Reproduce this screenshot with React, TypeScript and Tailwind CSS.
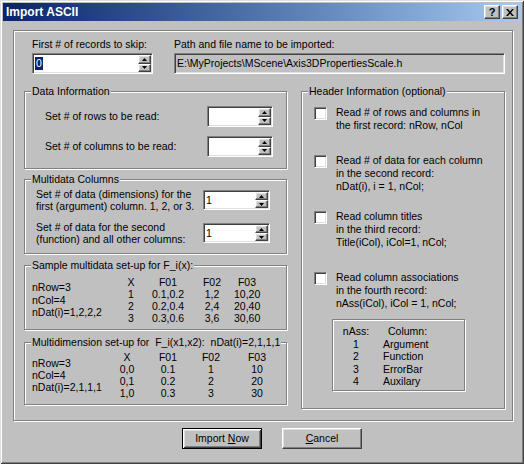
import type { ReactNode } from "react";

const sunken =
  "border border-t-[#808080] border-l-[#808080] border-r-white border-b-white shadow-[inset_1px_1px_0_#404040,inset_-1px_-1px_0_#dfdfdf]";
const raised =
  "border border-t-white border-l-white border-r-[#404040] border-b-[#404040] shadow-[inset_-1px_-1px_0_#808080,inset_1px_1px_0_#dfdfdf]";

function Group({ title, className, children }: { title: string; className?: string; children?: ReactNode }) {
  return (
    <div className={`relative border border-[#808080] shadow-[inset_1px_1px_0_#fff,1px_1px_0_#fff] ${className ?? ""}`}>
      <span className="absolute -top-[7px] left-[6px] bg-[#c0c0c0] px-[1px] leading-[13px] whitespace-pre">{title}</span>
      {children}
    </div>
  );
}

function SpinArrow({ up }: { up?: boolean }) {
  return (
    <div className={`flex flex-1 items-center justify-center bg-[#c0c0c0] ${raised}`}>
      <svg width="5" height="3" viewBox="0 0 5 3">
        {up ? <polygon points="2.5,0 5,3 0,3" fill="#000" /> : <polygon points="0,0 5,0 2.5,3" fill="#000" />}
      </svg>
    </div>
  );
}

function SpinBox({ value, selected, className }: { value?: string; selected?: boolean; className?: string }) {
  return (
    <div className={`flex bg-white p-[1px] ${sunken} ${className ?? ""}`}>
      <div className="flex flex-1 items-center pl-[1px] leading-[13px]">
        {value && (selected ? <span className="bg-[#0a246a] px-[1px] text-white">{value}</span> : <span>{value}</span>)}
      </div>
      <div className="flex w-[13px] flex-col">
        <SpinArrow up />
        <SpinArrow />
      </div>
    </div>
  );
}

function CheckRow({ lines, className }: { lines: string[]; className?: string }) {
  return (
    <div className={`flex items-start ${className ?? ""}`}>
      <div className={`mt-[1px] h-[13px] w-[13px] shrink-0 bg-white ${sunken}`} />
      <div className="ml-[9px] leading-[13px]">
        {lines.map((l) => (
          <div key={l}>{l}</div>
        ))}
      </div>
    </div>
  );
}

const SAMPLE = [
  ["X", "F01", "F02", "F03"],
  ["1", "0.1,0.2", "1,2", "10,20"],
  ["2", "0.2,0.4", "2,4", "20,40"],
  ["3", "0.3,0.6", "3,6", "30,60"],
];

const MULTI = [
  ["X", "F01", "F02", "F03"],
  ["0,0", "0.1", "1", "10"],
  ["0,1", "0.2", "2", "20"],
  ["1,0", "0.3", "3", "30"],
];

const ASSOC = [
  ["1", "Argument"],
  ["2", "Function"],
  ["3", "ErrorBar"],
  ["4", "Auxilary"],
];

export default function App() {
  return (
    <div className="h-[464px] w-[524px] overflow-hidden bg-[#c0c0c0] p-[3px] font-['Liberation_Sans',Arial,sans-serif] text-[10.5px] text-black shadow-[inset_1px_1px_0_#dfdfdf,inset_-1px_-1px_0_#404040,inset_2px_2px_0_#fff,inset_-2px_-2px_0_#808080]">
      {/* title bar */}
      <div className="flex h-[18px] items-center bg-gradient-to-r from-[#0a246a] to-[#a6caf0] pl-[3px] pr-[3px]">
        <span className="flex-1 text-[12px] font-bold text-white">Import ASCII</span>
        <div className={`flex h-[14px] w-[16px] items-center justify-center bg-[#c0c0c0] text-[11px] leading-none font-bold ${raised}`}>?</div>
        <div className={`ml-[2px] flex h-[14px] w-[16px] items-center justify-center bg-[#c0c0c0] ${raised}`}>
          <svg width="8" height="7" viewBox="0 0 8 7">
            <path d="M0 0h2l2 2.5L6 0h2L5 3.5 8 7H6L4 4.5 2 7H0l3-3.5z" fill="#000" />
          </svg>
        </div>
      </div>

      {/* main frame */}
      <div className="ml-[10px] mt-[9px] h-[391px] w-[500px] border border-[#808080] shadow-[inset_1px_1px_0_#fff,1px_1px_0_#fff]">
        <div className="ml-[18px] flex pt-[7px]">
          <div className="w-[121px]">
            <div className="leading-[13px]">First # of records to skip:</div>
            <SpinBox value="0" selected className="mt-[2px] h-[21px]" />
          </div>
          <div className="ml-[21px] w-[331px]">
            <div className="leading-[13px]">Path and file name to be imported:</div>
            <div className={`mt-[2px] flex h-[21px] items-center bg-[#c0c0c0] pl-[2px] ${sunken}`}>
              E:\MyProjects\MScene\Axis3DPropertiesScale.h
            </div>
          </div>
        </div>

        <div className="ml-[10px] mt-[17px] flex">
          <div className="flex w-[263px] flex-col">
            <Group title="Data Information" className="h-[78px] pl-[20px] pt-[14px]">
              <div className="flex items-center">
                <span className="w-[162px]">Set # of rows to be read:</span>
                <SpinBox className="h-[21px] w-[66px]" />
              </div>
              <div className="mt-[9px] flex items-center">
                <span className="w-[162px]">Set # of columns to be read:</span>
                <SpinBox className="h-[21px] w-[66px]" />
              </div>
            </Group>

            <Group title="Multidata Columns" className="mt-[10px] h-[75px] pl-[11px] pt-[8px]">
              <div className="flex items-start">
                <div className="w-[167px] leading-[12px]">
                  Set # of data (dimensions) for the
                  <br />
                  first (argument) column. 1, 2, or 3.
                </div>
                <SpinBox value="1" className="mt-[2px] h-[20px] w-[67px]" />
              </div>
              <div className="mt-[9px] flex items-start">
                <div className="w-[167px] leading-[12px]">
                  Set # of data for the second
                  <br />
                  (function) and all other columns:
                </div>
                <SpinBox value="1" className="mt-[2px] h-[20px] w-[67px]" />
              </div>
            </Group>

            <Group title="Sample multidata set-up for F_i(x):" className="mt-[11px] h-[65px] pl-[7px] pt-[10px]">
              <div className="flex items-center">
                <div className="w-[84px] leading-[12.5px]">
                  <div>nRow=3</div>
                  <div>nCol=4</div>
                  <div>nDat(i)=1,2,2,2</div>
                </div>
                <div className="grid grid-cols-[30px_44px_44px_26px] text-center leading-[12px]">
                  {SAMPLE.flat().map((c, i) => (
                    <div key={i} className="whitespace-nowrap">{c}</div>
                  ))}
                </div>
              </div>
            </Group>

            <Group title="Multidimension set-up for  F_i(x1,x2):  nDat(i)=2,1,1,1" className="mt-[12px] h-[63px] pl-[7px] pt-[8px]">
              <div className="flex items-center">
                <div className="w-[81px] leading-[12px]">
                  <div>nRow=3</div>
                  <div>nCol=4</div>
                  <div>nDat(i)=2,1,1,1</div>
                </div>
                <div className="grid grid-cols-[30px_52px_34px_58px] text-center leading-[12px]">
                  {MULTI.flat().map((c, i) => (
                    <div key={i} className="whitespace-nowrap">{c}</div>
                  ))}
                </div>
              </div>
            </Group>
          </div>

          <Group title="Header Information (optional)" className="ml-[14px] h-[318px] w-[204px] pl-[12px] pt-[14px]">
            <CheckRow lines={["Read # of rows and columns in", "the first record: nRow, nCol"]} />
            <CheckRow className="mt-[22px]" lines={["Read # of data for each column", "in the second record:", "nDat(i), i = 1, nCol;"]} />
            <CheckRow className="mt-[17px]" lines={["Read column titles", "in the third record:", "Title(iCol), iCol=1, nCol;"]} />
            <CheckRow className="mt-[22px]" lines={["Read column associations", "in the fourth record:", "nAss(iCol), iCol = 1, nCol;"]} />
            <div className="ml-[18px] mt-[9px] h-[72px] w-[133px] border border-[#808080] pl-[7px] pt-[5px] leading-[12.5px] shadow-[inset_1px_1px_0_#fff,1px_1px_0_#fff]">
              <div className="flex">
                <span className="w-[32px] text-center">nAss:</span>
                <span className="ml-[16px]">Column:</span>
              </div>
              {ASSOC.map(([n, name]) => (
                <div key={n} className="flex">
                  <span className="w-[32px] text-center">{n}</span>
                  <span className="ml-[11px]">{name}</span>
                </div>
              ))}
            </div>
          </Group>
        </div>
      </div>

      {/* buttons */}
      <div className="ml-[179px] mt-[7px] flex gap-[20px]">
        <button
          type="button"
          className="h-[21px] w-[80px] border border-black bg-[#c0c0c0] shadow-[inset_1px_1px_0_#fff,inset_-1px_-1px_0_#404040,inset_2px_2px_0_#dfdfdf,inset_-2px_-2px_0_#808080]"
        >
          Import <span className="underline">N</span>ow
        </button>
        <button type="button" className={`h-[21px] w-[80px] bg-[#c0c0c0] ${raised}`}>
          <span className="underline">C</span>ancel
        </button>
      </div>
    </div>
  );
}
